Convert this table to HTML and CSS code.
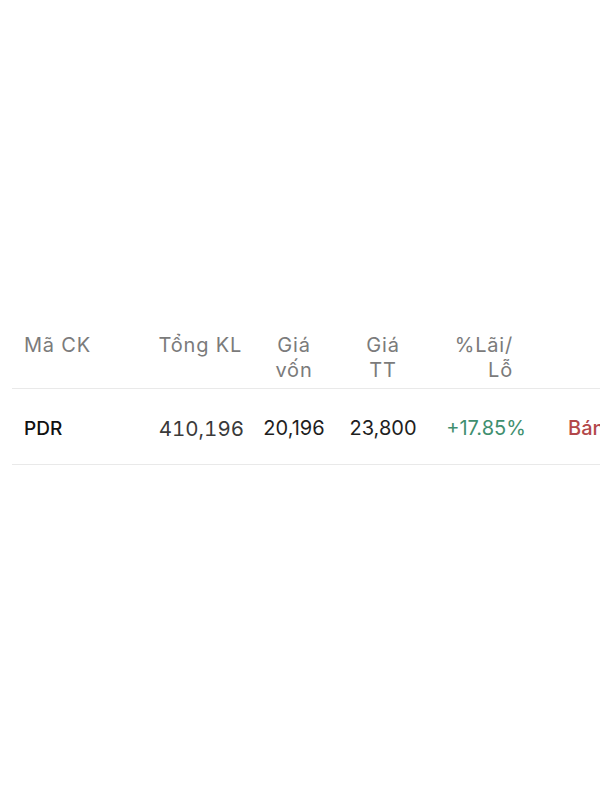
FILE: index.html
```html
<!DOCTYPE html>
<html lang="vi">
<head>
<meta charset="utf-8">
<link rel="stylesheet" href="styles.css">
</head>
<body>
<div class="table">
  <div class="row head">
    <div class="c c1">Mã CK</div>
    <div class="c c2">Tổng KL</div>
    <div class="c c3">Giá<br>vốn</div>
    <div class="c c4">Giá<br>TT</div>
    <div class="c c5">%Lãi/<br>Lỗ</div>
    <div class="c c6"></div>
  </div>
  <div class="row data">
    <div class="c c1 sym">PDR</div>
    <div class="c c2 vol">410,196</div>
    <div class="c c3">20,196</div>
    <div class="c c4">23,800</div>
    <div class="c c5 up">+17.85%</div>
    <div class="c c6 sell">Bán</div>
  </div>
</div>
</body>
</html>
```

FILE: styles.css
```css
html, body {
  margin: 0;
  padding: 0;
  background: #ffffff;
  overflow: hidden;
  width: 600px;
  height: 800px;
}
body {
  font-family: Inter, "Liberation Sans", sans-serif;
}
.table {
  margin-top: 333px;
  margin-left: 12px;
  width: 588px;
  overflow: hidden;
}
.row {
  display: grid;
  grid-template-columns: 128px 108px 92px 86px 120px 160px;
  align-items: start;
  border-bottom: 1px solid #e9e9e9;
}
.c {
  font-size: 20px;
  line-height: 25px;
  white-space: nowrap;
}
.head {
  padding-bottom: 5px;
  color: #7b7b7b;
}
.head .c {
  letter-spacing: 0.8px;
}
.head .c2 { text-align: right; padding-right: 6px; }
.head .c5 { text-align: right; padding-right: 33px; }
.data {
  padding-top: 27px;
  padding-bottom: 23px;
  color: #1e1e1e;
}
.c1 { padding-left: 12px; }
.c2 { text-align: right; padding-right: 4px; }
.c3, .c4 { text-align: center; }
.c5 { text-align: center; }
.c6 { padding-left: 22px; }
.sym { font-weight: 500; font-size: 19px; color: #111; }
.vol {
  font-size: 20.5px;
  font-variant-numeric: tabular-nums;
  color: #3a3a3a;
}
.up { color: #3f8f6f; }
.sell { color: #b3474a; font-weight: 500; }
```
